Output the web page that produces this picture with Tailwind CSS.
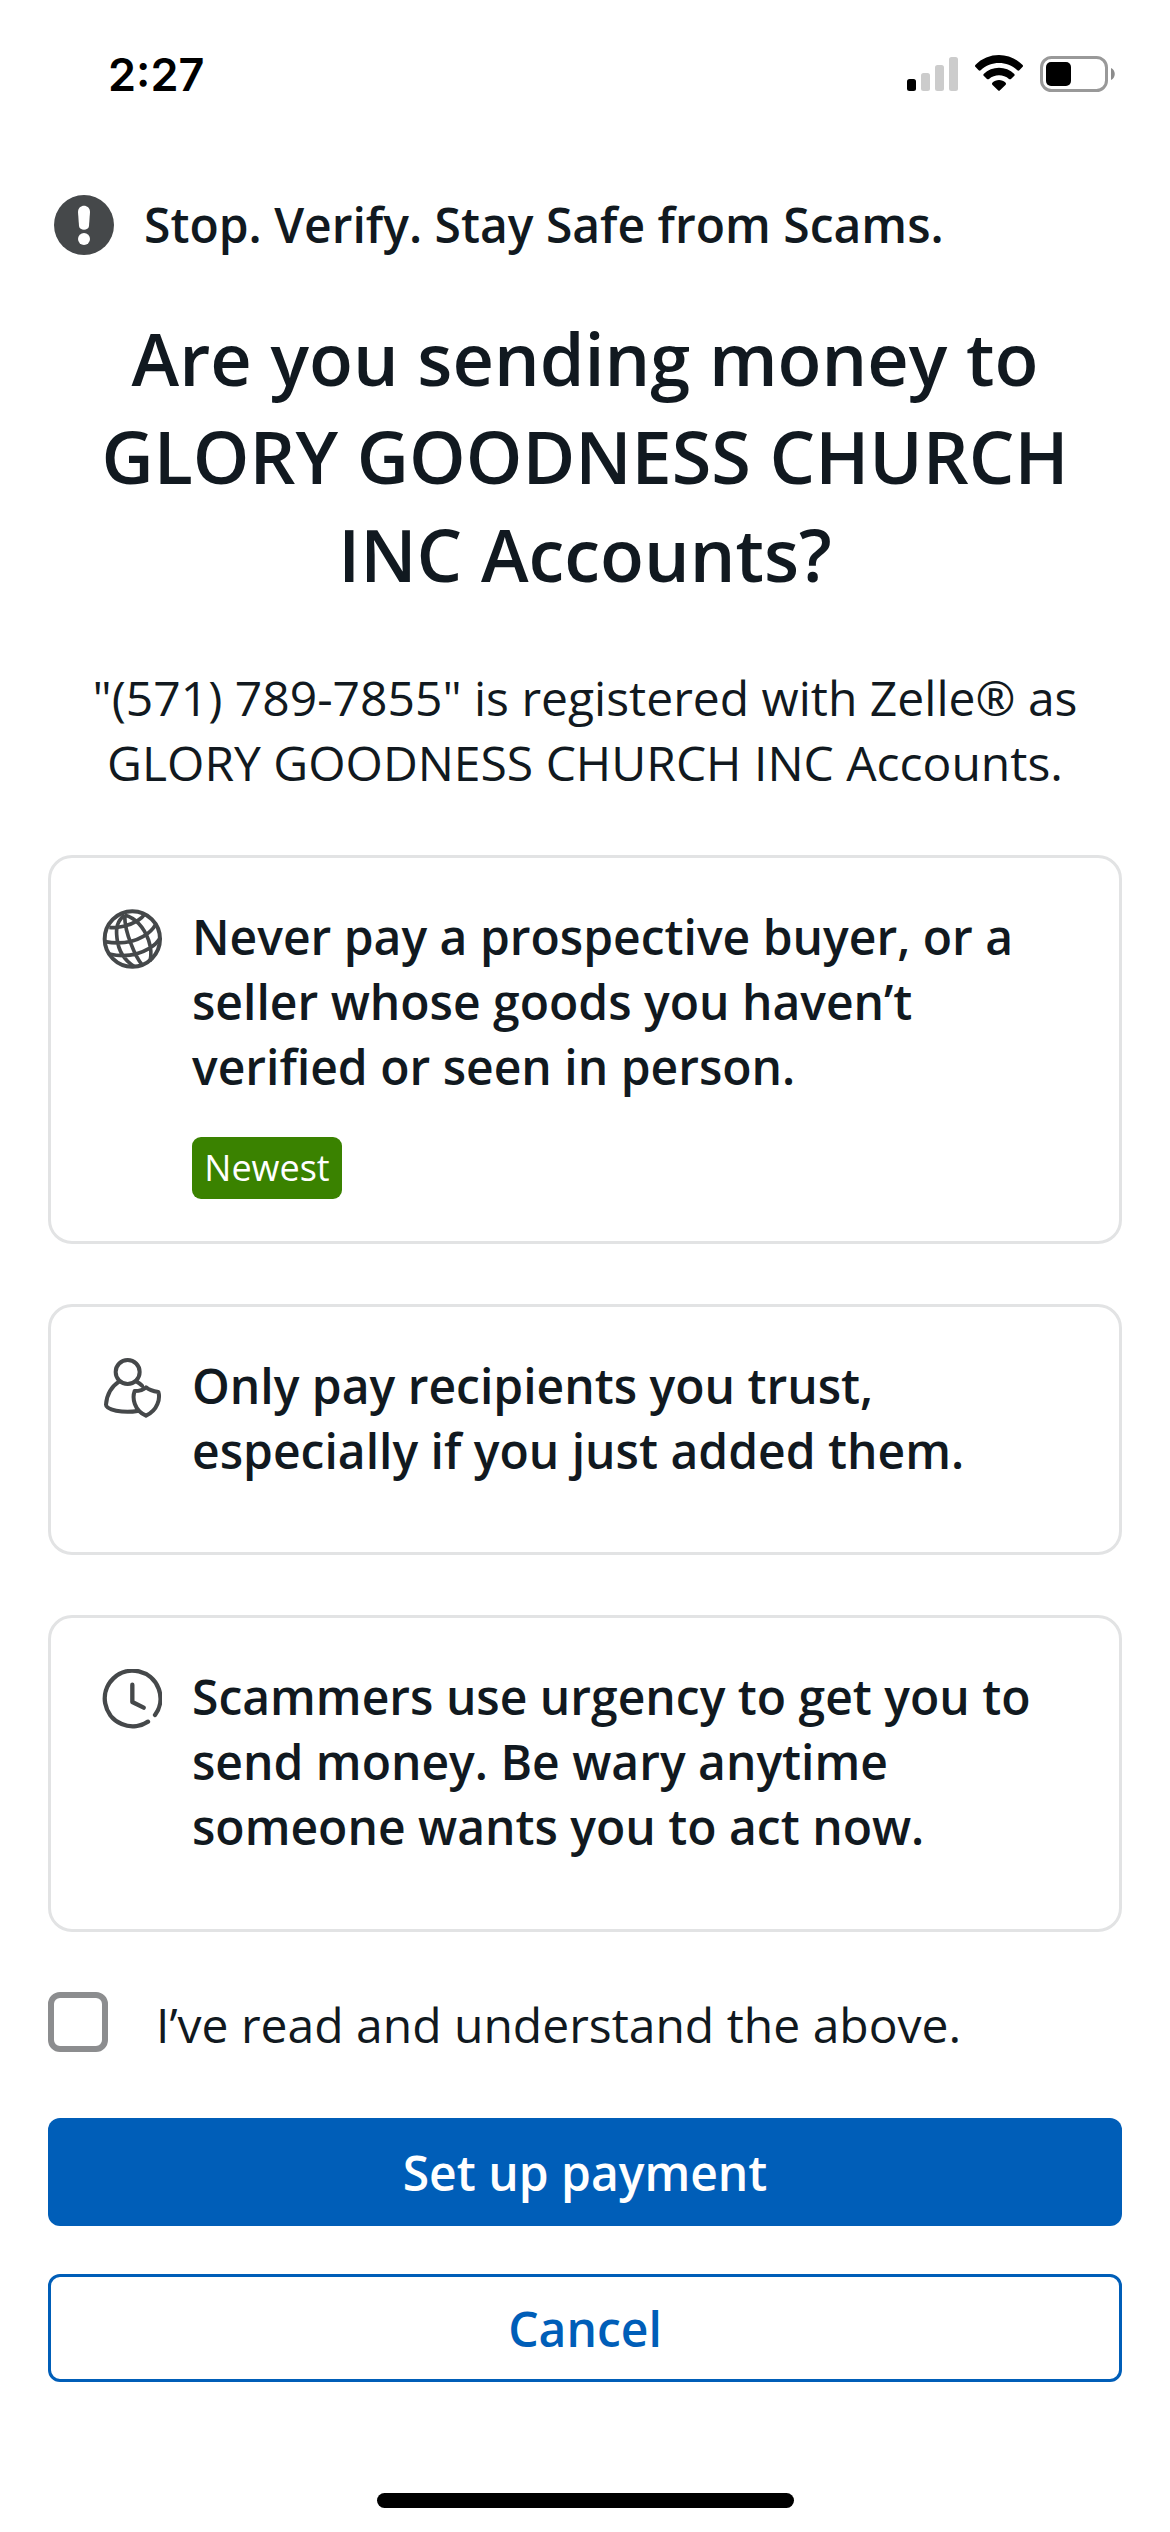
<!DOCTYPE html>
<html lang="en">
<head>
<meta charset="utf-8">
<title>Verify recipient</title>
<script src="https://cdn.jsdelivr.net/npm/@tailwindcss/browser@4"></script>
</head>
<body class="bg-white">
<div class="w-[1170px] h-[2532px] overflow-hidden font-['Open_Sans',sans-serif] text-[#111920] text-[48px] leading-[65px] flex flex-col">
  <header class="h-[192px] shrink-0 flex items-start justify-between pl-[108px] pr-[54px] text-black">
    <span class="font-['Inter',sans-serif] font-semibold text-[45px] leading-[56px] mt-[47px]">2:27</span>
    <div class="flex items-start mt-[54px]">
      <svg class="w-[52px] h-[38px] mr-[16px]" viewBox="0 0 52 38">
        <rect x="0" y="25" width="9" height="12" rx="2.5" fill="#000"/>
        <g fill="#ccc"><rect x="14" y="19" width="9" height="18" rx="2.5"/><rect x="28" y="11" width="9" height="26" rx="2.5"/><rect x="42" y="3" width="9" height="34" rx="2.5"/></g>
      </svg>
      <svg class="w-[48px] h-[38px] mr-[17px]" viewBox="285 72 144 114">
        <path d="M286 105C325 65 389 65 428 105Q430 108 428 110L418 121Q415 123 412 121C381 92 333 92 302 121Q299 123 296 121L286 110Q284 108 286 105ZM311 132C336 107 378 107 403 132Q405 135 403 137L393 147Q390 149 387 147C370 132 344 132 327 147Q324 149 321 147L311 137Q309 135 311 132ZM337 158C348 147 366 147 377 158Q379 161 377 164L360 181Q357 184 354 181L337 164Q335 161 337 158Z"/>
      </svg>
      <svg class="w-[76px] h-[38px]" viewBox="0 0 76 38">
        <rect x="1.5" y="3.5" width="65" height="33" rx="10" fill="none" stroke="#999" stroke-width="3"/>
        <rect x="6" y="8" width="25" height="24" rx="5" fill="#000"/>
        <path d="M71 14C76 16 76 24 71 26Z" fill="#8c8c8c"/>
      </svg>
    </div>
  </header>
  <main class="flex flex-col px-[48px]">
    <div class="flex items-center pl-[6px] h-[65px]">
      <svg class="w-[60px] h-[60px] mr-[30px]" viewBox="0 0 60 60">
        <circle cx="30" cy="30" r="30" fill="#45484a"/>
        <path d="M24 17C24 8.500 36 8.500 36 17L35 31C34.500 36 25.500 36 25 31Z" fill="#fff"/>
        <circle cx="30" cy="44" r="6" fill="#fff"/>
      </svg>
      <p class="font-semibold">Stop. Verify. Stay Safe from Scams.</p>
    </div>
    <h1 class="text-[72px] font-semibold leading-[98px] text-center mt-[52px]">Are you sending money to<br>GLORY GOODNESS CHURCH<br>INC Accounts?</h1>
    <p class="text-center mt-[62px]">"(571) 789-7855" is registered with Zelle® as<br>GLORY GOODNESS CHURCH INC Accounts.</p>
    <section class="mt-[60px] h-[389px] border-[3px] border-[#e2e3e4] rounded-[24px] flex items-start pl-[51px] pt-[46px]">
      <svg class="w-[60px] h-[60px] mt-[5px] mr-[30px]" viewBox="36 57 180 180" fill="none" stroke="#45484a" stroke-width="11">
        <circle cx="127" cy="147" r="83" stroke-width="12"/>
        <path d="M104 75C81 94 77 113 81 145C85 183 103 211 133 230M104 75C104 105 112 135 124 164C133 188 142 207 156 224M104 75C139 85 163 116 176 151C184 176 184 198 180 214M58 112C83 115 119 107 143 92C153 86 160 79 164 73M45 155C89 163 129 157 160 139C179 128 190 116 197 103M58 192C102 202 144 195 178 175C195 165 205 154 211 142"/>
      </svg>
      <div>
        <p class="font-semibold">Never pay a prospective buyer, or a<br>seller whose goods you haven’t<br>verified or seen in person.</p>
        <span class="mt-[38px] w-[150px] h-[62px] rounded-[9px] bg-[#3a8200] text-white text-[36px] leading-[62px] flex justify-center">Newest</span>
      </div>
    </section>
    <section class="mt-[60px] h-[251px] border-[3px] border-[#e2e3e4] rounded-[24px] flex items-start pl-[51px] pt-[46px]">
      <svg class="w-[60px] h-[60px] mt-[5px] mr-[30px]" viewBox="36 54 180 180" fill="none" stroke="#45484a" stroke-width="12" stroke-linecap="round" stroke-linejoin="round">
        <circle cx="113" cy="96" r="36"/>
        <path d="M88 124C65 139 50 164 48 194C47 210 99 220 143 213M138 124Q149 130 156 137M168 142C159 151 146 153 134 153C126 174 132 211 168 227C204 211 211 174 205 156C190 154 178 151 168 142Z"/>
      </svg>
      <p class="font-semibold">Only pay recipients you trust,<br>especially if you just added them.</p>
    </section>
    <section class="mt-[60px] h-[317px] border-[3px] border-[#e2e3e4] rounded-[24px] flex items-start pl-[51px] pt-[46px]">
      <svg class="w-[60px] h-[60px] mt-[5px] mr-[30px]" viewBox="36 57 180 180" fill="none" stroke="#45484a" stroke-width="13" stroke-linecap="round" stroke-linejoin="round">
        <path d="M174 215A83.500 83.500 0 1 1 195 195M127 104V156L161 173"/>
      </svg>
      <p class="font-semibold">Scammers use urgency to get you to<br>send money. Be wary anytime<br>someone wants you to act now.</p>
    </section>
    <label class="mt-[60px] flex items-start h-[126px]">
      <span class="w-[60px] h-[60px] border-[6px] border-[#8c8d8f] rounded-[12px] mr-[48px]"></span>
      <span>I’ve read and understand the above.</span>
    </label>
    <button class="h-[108px] rounded-[12px] bg-[#005eb8] text-white font-semibold">Set up payment</button>
    <button class="mt-[48px] h-[108px] rounded-[12px] border-[3px] border-[#005eb8] text-[#005eb8] font-semibold">Cancel</button>
  </main>
  <div class="mt-[111px] w-[417px] h-[15px] rounded-full bg-black self-center shrink-0"></div>
</div>
</body>
</html>
